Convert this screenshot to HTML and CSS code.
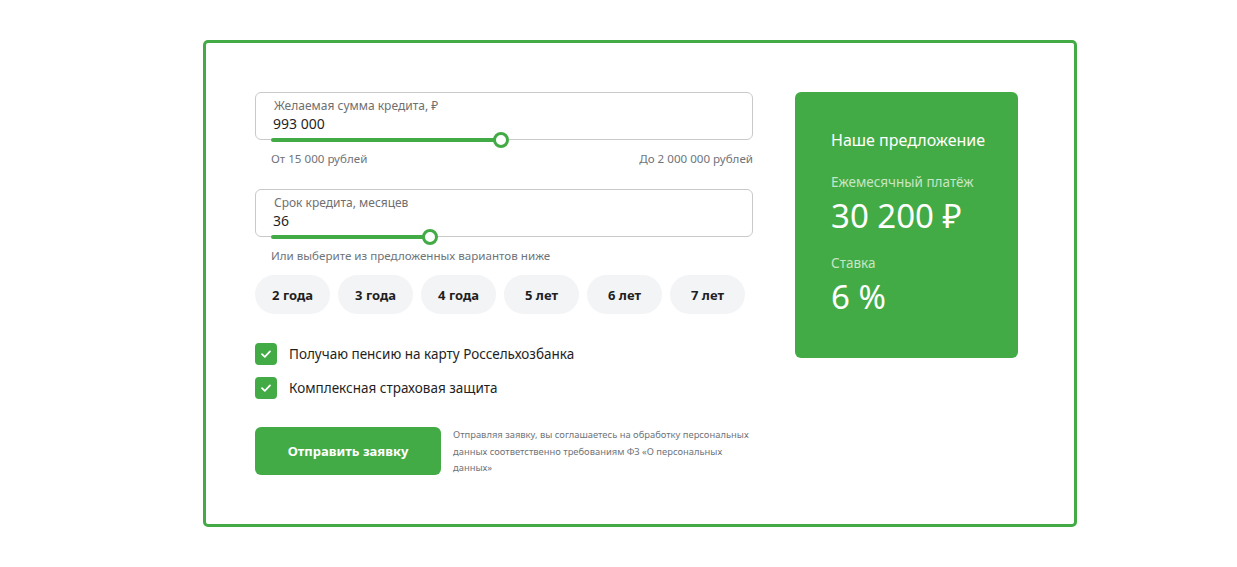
FILE: index.html
```html
<!DOCTYPE html>
<html lang="ru">
<head>
<meta charset="utf-8">
<title>Кредит</title>
<link rel="stylesheet" href="styles.css">
</head>
<body>
<div class="frame">
  <div class="form">
    <div class="field field-sum">
      <div class="input">
        <div class="label">Желаемая сумма кредита, ₽</div>
        <div class="value">993 000</div>
        <div class="slider"><div class="fill" style="width:230px"></div><div class="knob"></div></div>
      </div>
      <div class="range"><span>От 15 000 рублей</span><span>До 2 000 000 рублей</span></div>
    </div>
    <div class="field field-term">
      <div class="input">
        <div class="label">Срок кредита, месяцев</div>
        <div class="value">36</div>
        <div class="slider"><div class="fill" style="width:159px"></div><div class="knob"></div></div>
      </div>
      <div class="range"><span>Или выберите из предложенных вариантов ниже</span></div>
    </div>
    <div class="chips">
      <button class="chip">2 года</button>
      <button class="chip">3 года</button>
      <button class="chip">4 года</button>
      <button class="chip">5 лет</button>
      <button class="chip">6 лет</button>
      <button class="chip">7 лет</button>
    </div>
    <div class="checks">
      <label class="check"><span class="box"><svg width="12" height="10" viewBox="0 0 12 10"><path d="M2 5.2 L4.8 7.8 L10 2.4" fill="none" stroke="#fff" stroke-width="1.8" stroke-linecap="round" stroke-linejoin="round"/></svg></span>Получаю пенсию на карту Россельхозбанка</label>
      <label class="check"><span class="box"><svg width="12" height="10" viewBox="0 0 12 10"><path d="M2 5.2 L4.8 7.8 L10 2.4" fill="none" stroke="#fff" stroke-width="1.8" stroke-linecap="round" stroke-linejoin="round"/></svg></span>Комплексная страховая защита</label>
    </div>
    <div class="submit-row">
      <button class="submit">Отправить заявку</button>
      <p class="note">Отправляя заявку, вы соглашаетесь на обработку персональных данных соответственно требованиям ФЗ «О персональных данных»</p>
    </div>
  </div>
  <div class="offer">
    <div class="offer-title">Наше предложение</div>
    <div class="offer-label">Ежемесячный платёж</div>
    <div class="offer-value">30 200 ₽</div>
    <div class="offer-label offer-label-rate">Ставка</div>
    <div class="offer-value">6 %</div>
  </div>
</div>
</body>
</html>
```

FILE: styles.css
```css
* { box-sizing: border-box; }
html, body { margin: 0; padding: 0; background: #fff; }
body {
  font-family: "Noto Sans", "Open Sans", sans-serif;
  color: #1f1f1f;
  padding: 40px 0 0 203px;
}
.frame {
  width: 874px;
  height: 487px;
  border: 3px solid #43ab46;
  border-radius: 5px;
  display: flex;
  align-items: flex-start;
  gap: 42px;
  padding: 49px 56px 49px 49px;
}
.form { width: 498px; display: flex; flex-direction: column; }
.field { display: flex; flex-direction: column; }
.field-term { margin-top: 22px; }
.input {
  position: relative;
  height: 48px;
  border: 1px solid #c9c9c9;
  border-radius: 6px;
  padding: 4px 0 0 17px;
}
.label { font-size: 12px; line-height: 18px; color: #6f6f6f; padding-left: 1px; }
.value { font-size: 14px; line-height: 18px; color: #1f1f1f; }
.slider {
  position: absolute;
  left: 15px;
  bottom: -3px;
  height: 4px;
  width: 466px;
}
.fill { height: 4px; background: #43ab46; border-radius: 2px; }
.knob {
  position: absolute;
  top: -6px;
  width: 16px;
  height: 16px;
  border-radius: 50%;
  background: #fff;
  border: 3px solid #43ab46;
}
.field-sum .knob { left: 222px; }
.field-term .knob { left: 151px; }
.range {
  display: flex;
  justify-content: space-between;
  font-size: 11.6px;
  line-height: 16px;
  color: #6f747a;
  padding: 11px 0 0 16px;
}
.chips { display: flex; gap: 8px; margin-top: 11px; }
.chip {
  width: 75px;
  height: 39px;
  border: none;
  border-radius: 20px;
  background: #f3f4f6;
  font-family: inherit;
  font-weight: 700;
  font-size: 13px;
  color: #1f1f1f;
  padding: 0;
}
.checks { display: flex; flex-direction: column; gap: 12px; margin-top: 29px; }
.check { display: flex; align-items: center; gap: 12px; font-size: 13.5px; line-height: 22px; color: #1f1f1f; }
.box {
  width: 22px; height: 22px;
  border-radius: 4px;
  background: #43ab46;
  display: flex; align-items: center; justify-content: center;
}
.submit-row { display: flex; gap: 12px; margin-top: 28px; align-items: flex-start; }
.submit {
  flex: none;
  width: 186px;
  height: 48px;
  border: none;
  border-radius: 6px;
  background: #43ab46;
  color: #fff;
  font-family: inherit;
  font-weight: 700;
  font-size: 13px;
}
.note {
  margin: 0;
  width: 309px;
  font-size: 9.4px;
  line-height: 16.7px;
  color: #6f747a;
}
.offer {
  flex: none;
  width: 223px;
  height: 266px;
  background: #43ab46;
  border-radius: 6px;
  padding: 37px 20px 0 36px;
  color: #fff;
}
.offer-title { font-size: 16px; line-height: 22px; }
.offer-label { font-size: 13.5px; line-height: 18px; color: #c6e6c4; margin-top: 22px; }
.offer-value { font-size: 33px; line-height: 40px; margin-top: 5px; }
.offer-label-rate { margin-top: 18px; }
```
